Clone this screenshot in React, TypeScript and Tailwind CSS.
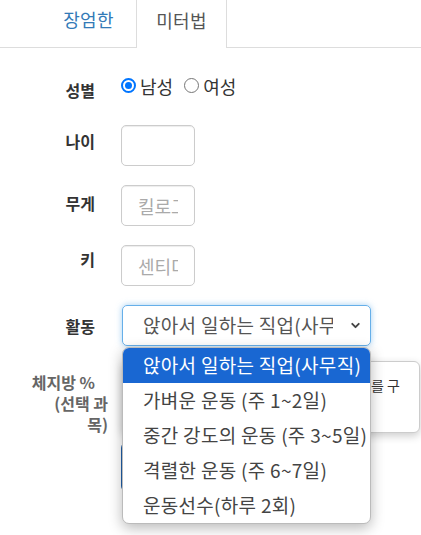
import React from 'react';
import { ChevronDown } from 'lucide-react';

const activities = [
  '앉아서 일하는 직업(사무직)',
  '가벼운 운동 (주 1~2일)',
  '중간 강도의 운동 (주 3~5일)',
  '격렬한 운동 (주 6~7일)',
  '운동선수(하루 2회)',
];

const Radio: React.FC<{ checked?: boolean; label: string }> = ({ checked, label }) => (
  <span className="flex items-center">
    {checked ? (
      <span className="w-[15px] h-[15px] rounded-full border-[2px] border-[#0075ff] flex items-center justify-center">
        <span className="w-[7px] h-[7px] rounded-full bg-[#0075ff]" />
      </span>
    ) : (
      <span className="w-[15px] h-[15px] rounded-full border-[1.5px] border-[#767676]" />
    )}
    <span className="ml-[4px] text-[18px] leading-[20px] text-[#333]">{label}</span>
  </span>
);

const Row: React.FC<{ label: string; pt: string; children: React.ReactNode }> = ({ label, pt, children }) => (
  <div className="flex items-start h-[41px]">
    <div className={`w-[95px] text-right font-bold text-[16px] leading-[20px] text-[#333] ${pt}`}>{label}</div>
    <div className="ml-[26px] h-full flex items-center">{children}</div>
  </div>
);

const inputCls =
  'w-[74px] h-[41px] border border-[#ccc] rounded-[5px] px-[16px] text-[18px] text-[#555] placeholder:text-[#aaa] outline-none shadow-[inset_0_1px_1px_rgba(0,0,0,0.075)]';

export default function App() {
  return (
    <div className="relative w-[421px] h-[535px] overflow-hidden bg-white text-[#333] font-['Noto_Sans_CJK_KR','Noto_Sans',sans-serif]">
      {/* Tabs */}
      <div className="flex pl-[41px] h-[48px] border-b border-[#ddd]">
        <div className="w-[95px] flex items-center justify-center pb-[8px] text-[18px] tracking-[0.3px] text-[#337ab7]">장엄한</div>
        <div className="w-[91px] h-[48px] bg-white border-x border-[#ddd] flex items-center justify-center pb-[8px] text-[18px] tracking-[0.3px] text-[#555]">
          미터법
        </div>
      </div>

      {/* Form */}
      <div className="pt-[17px] flex flex-col gap-[19px]">
        <Row label="성별" pt="pt-[15px]">
          <div className="flex items-center gap-[11px]">
            <Radio checked label="남성" />
            <Radio label="여성" />
          </div>
        </Row>
        <Row label="나이" pt="pt-[6px]">
          <input className={inputCls} />
        </Row>
        <Row label="무게" pt="pt-[8px]">
          <input className={inputCls} placeholder="킬로그램" />
        </Row>
        <Row label="키" pt="pt-[4px]">
          <input className={inputCls} placeholder="센티미터" />
        </Row>
        <Row label="활동" pt="pt-[11px]">
          <div className="w-[249px] h-[41px] ml-px flex items-center border border-[#66afe9] rounded-[5px] shadow-[0_0_6px_rgba(102,175,233,0.6)] pl-[20px] pr-[8px]">
            <span className="w-[190px] overflow-hidden whitespace-nowrap text-[19px] tracking-[0.3px] text-[#555]">{activities[0]}</span>
            <ChevronDown className="ml-auto text-[#444]" size={13} strokeWidth={3.5} />
          </div>
        </Row>
      </div>

      {/* Body fat row with help box */}
      <div className="flex items-start mt-[15px]">
        <div className="w-[108px] text-right font-bold text-[16px] leading-[21px] text-[#666] pt-[11px]">
          <div className="pr-[13px]">체지방 %</div>
          <div>(선택 과</div>
          <div>목)</div>
        </div>
        <div className="ml-[14px] w-[298px] h-[72px] border border-[#ccc] rounded-[6px] bg-white shadow-[0_3px_8px_rgba(0,0,0,0.2)] pr-[19px] pt-[14px] overflow-hidden">
          <div className="text-right whitespace-nowrap text-[14px] leading-[18px] text-[#333]">비워두면 자동으로 체지방률를 구</div>
          <div className="pl-[14px] text-[14px] leading-[18px] text-[#333]">합니다.</div>
        </div>
      </div>

      {/* Submit button (mostly hidden) */}
      <div className="ml-[121px] mt-[7px]">
        <button className="w-[140px] h-[50px] rounded-[6px] bg-[#1f5fa8] text-white text-[17px]">계산하기</button>
      </div>

      {/* Open select dropdown */}
      <div className="absolute left-[122px] top-[347px] w-[249px] rounded-[7px] border border-[#bbb] bg-white overflow-hidden shadow-[0_4px_14px_rgba(0,0,0,0.28)]">
        {activities.map((a, i) => (
          <div
            key={i}
            className={`h-[35px] flex items-center pl-[20px] whitespace-nowrap text-[19px] tracking-[0.3px] ${
              i === 0 ? 'bg-[#1967d2] text-white' : 'text-[#444]'
            }`}
          >
            {a}
          </div>
        ))}
      </div>
    </div>
  );
}
